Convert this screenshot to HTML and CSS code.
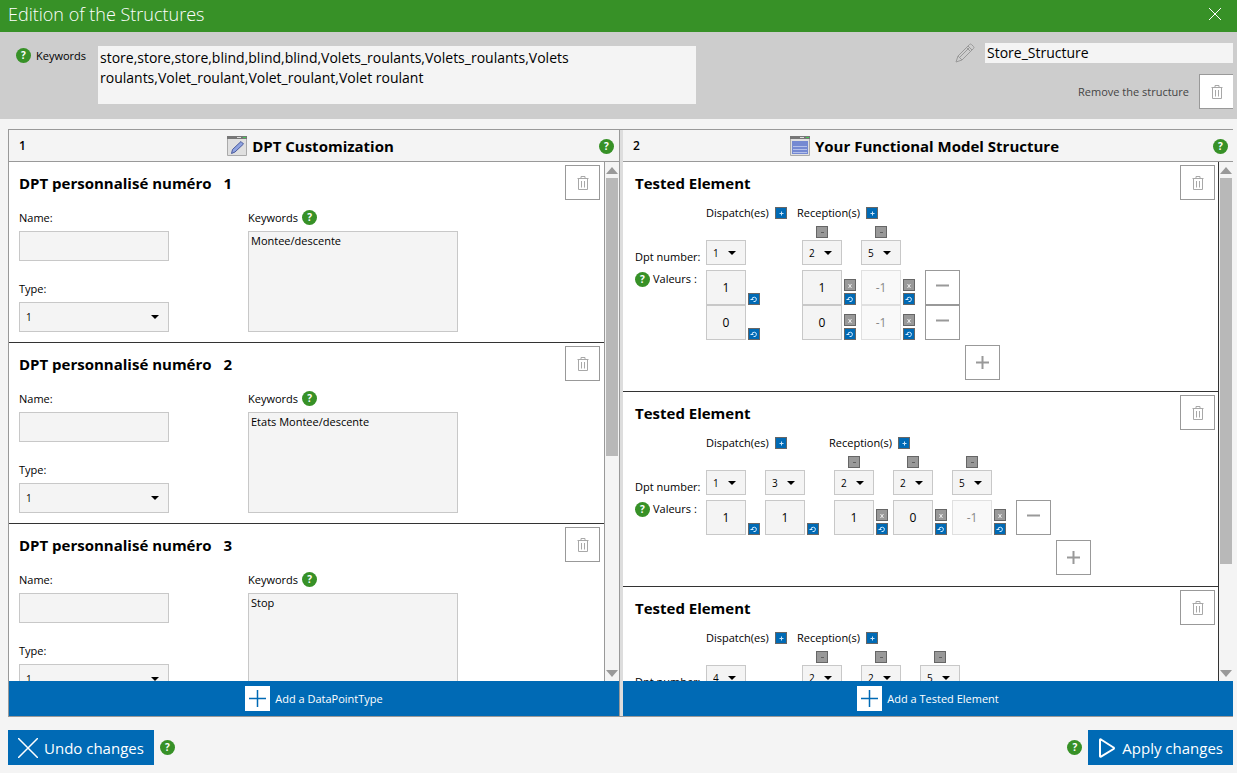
FILE: index.html
```html
<!DOCTYPE html>
<html lang="en">
<head>
<meta charset="utf-8">
<title>Edition of the Structures</title>
<link rel="stylesheet" href="styles.css">
</head>
<body>
<svg class="defs" aria-hidden="true">
  <symbol id="trash" viewBox="0 0 12 14"><path d="M0.500 2.500h11M4 2V0.500h4V2M1.500 3v10.500h9V3M4.500 5v6.500M7.500 5v6.500" fill="none" stroke="#a8a8a8"/></symbol>
  <symbol id="reload" viewBox="0 0 10 10"><path d="M3 5.500a2.200 2.200 0 1 1 1.500 2M1.500 5.500h3" fill="none" stroke="#d4ecff"/></symbol>
  <symbol id="tiny-plus" viewBox="0 0 10 10"><path d="M3.500 5.500h4M5.500 3.500v4" fill="none" stroke="#cfe6f8"/></symbol>
  <symbol id="tiny-minus" viewBox="0 0 10 10"><path d="M4 5.500h3" fill="none" stroke="#606060"/></symbol>
  <symbol id="tiny-x" viewBox="0 0 10 10"><path d="M3.500 4l3 4M6.500 4l-3 4" fill="none" stroke="#eee"/></symbol>
  <symbol id="minus" viewBox="0 0 33 33"><path d="M10 14.500h13" fill="none" stroke="#999" stroke-width="2"/></symbol>
  <symbol id="plus" viewBox="0 0 33 33"><path d="M10 16.500h13M16.500 10v13" fill="none" stroke="#999" stroke-width="2"/></symbol>
</svg>

<header class="titlebar">
  <h1>Edition of the Structures</h1>
  <button class="close" aria-label="Close"><svg width="12" height="12" viewBox="0 0 12 12"><path d="M0 0l12 12M12 0L0 12" stroke="#fff" fill="none"/></svg></button>
</header>

<section class="summary">
  <div class="summary-keywords">
    <button class="help" aria-label="Help on keywords">?</button>
    <label for="keywords">Keywords</label>
    <textarea id="keywords">store,store,store,blind,blind,blind,Volets_roulants,Volets_roulants,Volets roulants,Volet_roulant,Volet_roulant,Volet roulant</textarea>
  </div>
  <div class="summary-side">
    <div class="rename">
      <svg width="20" height="20" viewBox="0 0 20 20" fill="none" stroke="#999"><path d="M1 19l2-6L14.500 1.500q1-1 2 0l2 2q1 1 0 2L7 17zM3 13l4 4M13 3l4 4M11.500 4.500l4 4M4.500 14.500L14 5"/></svg>
      <input type="text" aria-label="Structure name" value="Store_Structure">
    </div>
    <div class="remove-structure">
      <span>Remove the structure</span>
      <button class="square cut" aria-label="Remove the structure"><svg width="12" height="14"><use href="#trash"/></svg></button>
    </div>
  </div>
</section>

<main class="panels">
  <section class="panel panel-left">
    <header class="panel-head">
      <span class="step">1</span>
      <h2><svg width="20" height="20" viewBox="0 0 20 20"><path fill="#e0e0e0" stroke="#aaa" d="M.5.5h19v19H.5z"/><path fill="#777" d="M0 0h20v3H0z"/><path fill="#ddd" d="M10 1h4v1h-4z"/><path fill="#4c5" d="M16 1h3v1h-3z"/><path fill="#8fa3e0" stroke="#4a5a9c" d="M4.500 17.500l1-4L14 5.500l2.500 2.500L8 16z"/></svg>DPT Customization</h2>
      <button class="help" aria-label="Help on customization">?</button>
    </header>
    <div class="panel-body">
      <div class="items">
        <article class="item dpt">
          <header class="item-head"><h3>DPT personnalisé numéro <span>1</span></h3><button class="square" aria-label="Delete DPT 1"><svg width="12" height="14"><use href="#trash"/></svg></button></header>
          <div class="dpt-form">
            <div class="dpt-fields">
              <label for="name1">Name:</label><input id="name1" type="text">
              <label class="second" for="type1">Type:</label><span class="select wide"><select id="type1"><option>1</option></select></span>
            </div>
            <div class="dpt-keywords">
              <div class="label-row"><label for="kw1">Keywords</label><button class="help" aria-label="Help on keywords">?</button></div>
              <textarea id="kw1">Montee/descente</textarea>
            </div>
          </div>
        </article>
        <article class="item dpt">
          <header class="item-head"><h3>DPT personnalisé numéro <span>2</span></h3><button class="square" aria-label="Delete DPT 2"><svg width="12" height="14"><use href="#trash"/></svg></button></header>
          <div class="dpt-form">
            <div class="dpt-fields">
              <label for="name2">Name:</label><input id="name2" type="text">
              <label class="second" for="type2">Type:</label><span class="select wide"><select id="type2"><option>1</option></select></span>
            </div>
            <div class="dpt-keywords">
              <div class="label-row"><label for="kw2">Keywords</label><button class="help" aria-label="Help on keywords">?</button></div>
              <textarea id="kw2">Etats Montee/descente</textarea>
            </div>
          </div>
        </article>
        <article class="item dpt">
          <header class="item-head"><h3>DPT personnalisé numéro <span>3</span></h3><button class="square" aria-label="Delete DPT 3"><svg width="12" height="14"><use href="#trash"/></svg></button></header>
          <div class="dpt-form">
            <div class="dpt-fields">
              <label for="name3">Name:</label><input id="name3" type="text">
              <label class="second" for="type3">Type:</label><span class="select wide"><select id="type3"><option>1</option></select></span>
            </div>
            <div class="dpt-keywords">
              <div class="label-row"><label for="kw3">Keywords</label><button class="help" aria-label="Help on keywords">?</button></div>
              <textarea id="kw3">Stop</textarea>
            </div>
          </div>
        </article>
      </div>
      <div class="scrollbar"><i class="up"></i><div class="track"><div class="thumb thumb-left"></div></div><i class="down"></i></div>
    </div>
    <button class="add-bar"><svg width="25" height="25" viewBox="0 0 25 25"><path fill="#fff" d="M0 0h25v25H0z"/><path stroke="#006ab5" stroke-width="1.500" d="M4 12.500h17M12.500 4v17"/></svg>Add a DataPointType</button>
  </section>

  <section class="panel panel-right">
    <header class="panel-head">
      <span class="step">2</span>
      <h2><svg width="20" height="20" viewBox="0 0 20 20"><path fill="#e0e0e0" stroke="#aaa" d="M.5.5h19v19H.5z"/><path fill="#777" d="M0 0h20v3H0z"/><path fill="#ddd" d="M10 1h4v1h-4z"/><path fill="#4c5" d="M16 1h3v1h-3z"/><path fill="#7489d2" d="M2 5h16v13H2z"/><path stroke="#b4c0ea" d="M3 10.500h14M3 13.500h14M3 16.500h14"/></svg>Your Functional Model Structure</h2>
      <button class="help" aria-label="Help on the model structure">?</button>
    </header>
    <div class="panel-body">
      <div class="items">
        <article class="item test">
          <header class="item-head"><h3>Tested Element</h3><button class="square" aria-label="Delete element"><svg width="12" height="14"><use href="#trash"/></svg></button></header>
          <div class="matrix">
            <div class="row-labels"><span>Dpt number:</span><span><button class="help" aria-label="Help on values">?</button>Valeurs :</span></div>
            <div class="group">
              <div class="group-head">Dispatch(es)<button class="mini blue" aria-label="Add dispatch"><svg><use href="#tiny-plus"/></svg></button></div>
              <div class="cols">
                <div class="col">
                  <span class="select"><select aria-label="Dpt number"><option>1</option></select></span>
                  <div class="cells">
                    <div class="cell"><input aria-label="Value" value="1"><button class="mini blue" aria-label="Reset"><svg><use href="#reload"/></svg></button></div>
                    <div class="cell"><input aria-label="Value" value="0"><button class="mini blue" aria-label="Reset"><svg><use href="#reload"/></svg></button></div>
                  </div>
                </div>
              </div>
            </div>
            <div class="group reception">
              <div class="group-head">Reception(s)<button class="mini blue" aria-label="Add reception"><svg><use href="#tiny-plus"/></svg></button></div>
              <div class="cols">
                <div class="col">
                  <button class="mini grey drop" aria-label="Remove column"><svg><use href="#tiny-minus"/></svg></button>
                  <span class="select"><select aria-label="Dpt number"><option>2</option></select></span>
                  <div class="cells">
                    <div class="cell"><input aria-label="Value" value="1"><div class="tools"><button class="mini grey" aria-label="Disable"><svg><use href="#tiny-x"/></svg></button><button class="mini blue" aria-label="Reset"><svg><use href="#reload"/></svg></button></div></div>
                    <div class="cell"><input aria-label="Value" value="0"><div class="tools"><button class="mini grey" aria-label="Disable"><svg><use href="#tiny-x"/></svg></button><button class="mini blue" aria-label="Reset"><svg><use href="#reload"/></svg></button></div></div>
                  </div>
                </div>
                <div class="col">
                  <button class="mini grey drop" aria-label="Remove column"><svg><use href="#tiny-minus"/></svg></button>
                  <span class="select"><select aria-label="Dpt number"><option>5</option></select></span>
                  <div class="cells">
                    <div class="cell"><input aria-label="Value" value="-1" disabled><div class="tools"><button class="mini grey" aria-label="Disable"><svg><use href="#tiny-x"/></svg></button><button class="mini blue" aria-label="Reset"><svg><use href="#reload"/></svg></button></div></div>
                    <div class="cell"><input aria-label="Value" value="-1" disabled><div class="tools"><button class="mini grey" aria-label="Disable"><svg><use href="#tiny-x"/></svg></button><button class="mini blue" aria-label="Reset"><svg><use href="#reload"/></svg></button></div></div>
                  </div>
                </div>
              </div>
            </div>
            <div class="row-tools">
              <button class="square" aria-label="Remove row"><svg width="33" height="33"><use href="#minus"/></svg></button>
              <button class="square" aria-label="Remove row"><svg width="33" height="33"><use href="#minus"/></svg></button>
            </div>
            <button class="square add-row" aria-label="Add row"><svg width="33" height="33"><use href="#plus"/></svg></button>
          </div>
        </article>

        <article class="item test">
          <header class="item-head"><h3>Tested Element</h3><button class="square" aria-label="Delete element"><svg width="12" height="14"><use href="#trash"/></svg></button></header>
          <div class="matrix">
            <div class="row-labels"><span>Dpt number:</span><span><button class="help" aria-label="Help on values">?</button>Valeurs :</span></div>
            <div class="group">
              <div class="group-head">Dispatch(es)<button class="mini blue" aria-label="Add dispatch"><svg><use href="#tiny-plus"/></svg></button></div>
              <div class="cols">
                <div class="col">
                  <span class="select"><select aria-label="Dpt number"><option>1</option></select></span>
                  <div class="cells"><div class="cell"><input aria-label="Value" value="1"><button class="mini blue" aria-label="Reset"><svg><use href="#reload"/></svg></button></div></div>
                </div>
                <div class="col">
                  <span class="select"><select aria-label="Dpt number"><option>3</option></select></span>
                  <div class="cells"><div class="cell"><input aria-label="Value" value="1"><button class="mini blue" aria-label="Reset"><svg><use href="#reload"/></svg></button></div></div>
                </div>
              </div>
            </div>
            <div class="group reception">
              <div class="group-head">Reception(s)<button class="mini blue" aria-label="Add reception"><svg><use href="#tiny-plus"/></svg></button></div>
              <div class="cols">
                <div class="col">
                  <button class="mini grey drop" aria-label="Remove column"><svg><use href="#tiny-minus"/></svg></button>
                  <span class="select"><select aria-label="Dpt number"><option>2</option></select></span>
                  <div class="cells"><div class="cell"><input aria-label="Value" value="1"><div class="tools"><button class="mini grey" aria-label="Disable"><svg><use href="#tiny-x"/></svg></button><button class="mini blue" aria-label="Reset"><svg><use href="#reload"/></svg></button></div></div></div>
                </div>
                <div class="col">
                  <button class="mini grey drop" aria-label="Remove column"><svg><use href="#tiny-minus"/></svg></button>
                  <span class="select"><select aria-label="Dpt number"><option>2</option></select></span>
                  <div class="cells"><div class="cell"><input aria-label="Value" value="0"><div class="tools"><button class="mini grey" aria-label="Disable"><svg><use href="#tiny-x"/></svg></button><button class="mini blue" aria-label="Reset"><svg><use href="#reload"/></svg></button></div></div></div>
                </div>
                <div class="col">
                  <button class="mini grey drop" aria-label="Remove column"><svg><use href="#tiny-minus"/></svg></button>
                  <span class="select"><select aria-label="Dpt number"><option>5</option></select></span>
                  <div class="cells"><div class="cell"><input aria-label="Value" value="-1" disabled><div class="tools"><button class="mini grey" aria-label="Disable"><svg><use href="#tiny-x"/></svg></button><button class="mini blue" aria-label="Reset"><svg><use href="#reload"/></svg></button></div></div></div>
                </div>
              </div>
            </div>
            <div class="row-tools">
              <button class="square" aria-label="Remove row"><svg width="33" height="33"><use href="#minus"/></svg></button>
            </div>
            <button class="square add-row" aria-label="Add row"><svg width="33" height="33"><use href="#plus"/></svg></button>
          </div>
        </article>

        <article class="item test">
          <header class="item-head"><h3>Tested Element</h3><button class="square" aria-label="Delete element"><svg width="12" height="14"><use href="#trash"/></svg></button></header>
          <div class="matrix">
            <div class="row-labels"><span>Dpt number:</span></div>
            <div class="group">
              <div class="group-head">Dispatch(es)<button class="mini blue" aria-label="Add dispatch"><svg><use href="#tiny-plus"/></svg></button></div>
              <div class="cols">
                <div class="col"><span class="select"><select aria-label="Dpt number"><option>4</option></select></span></div>
              </div>
            </div>
            <div class="group reception">
              <div class="group-head">Reception(s)<button class="mini blue" aria-label="Add reception"><svg><use href="#tiny-plus"/></svg></button></div>
              <div class="cols">
                <div class="col">
                  <button class="mini grey drop" aria-label="Remove column"><svg><use href="#tiny-minus"/></svg></button>
                  <span class="select"><select aria-label="Dpt number"><option>2</option></select></span>
                </div>
                <div class="col">
                  <button class="mini grey drop" aria-label="Remove column"><svg><use href="#tiny-minus"/></svg></button>
                  <span class="select"><select aria-label="Dpt number"><option>2</option></select></span>
                </div>
                <div class="col">
                  <button class="mini grey drop" aria-label="Remove column"><svg><use href="#tiny-minus"/></svg></button>
                  <span class="select"><select aria-label="Dpt number"><option>5</option></select></span>
                </div>
              </div>
            </div>
          </div>
        </article>
      </div>
      <div class="scrollbar dark"><i class="up"></i><div class="track"><div class="thumb thumb-right"></div></div><i class="down"></i></div>
    </div>
    <button class="add-bar"><svg width="25" height="25" viewBox="0 0 25 25"><path fill="#fff" d="M0 0h25v25H0z"/><path stroke="#006ab5" stroke-width="1.500" d="M4 12.500h17M12.500 4v17"/></svg>Add a Tested Element</button>
  </section>
</main>

<footer class="actions">
  <div class="action">
    <button class="primary"><svg width="20" height="20" viewBox="0 0 20 20"><path d="M0 0l20 20M20 0L0 20" stroke="#fff" stroke-width="1.500"/></svg>Undo changes</button>
    <button class="help" aria-label="Help on undo">?</button>
  </div>
  <div class="action">
    <button class="help" aria-label="Help on apply">?</button>
    <button class="primary"><svg width="18" height="20" viewBox="0 0 18 20"><path d="M2 2v16q0 1 1 .5l12.500-7.500q1-1 0-1.500L3 1.500Q2 1 2 2z" fill="none" stroke="#fff" stroke-width="2"/></svg>Apply changes</button>
  </div>
</footer>
</body>
</html>
```
FILE: styles.css
```css
* { box-sizing: border-box; }

body {
  margin: 0;
  height: 100vh;
  display: flex;
  flex-direction: column;
  background: #f4f4f4;
  color: #000;
  font: 11px/20px "Open Sans", "Noto Sans", sans-serif;
}

h1, h2, h3 { margin: 0; }
button, input, select, textarea { font: inherit; color: inherit; margin: 0; padding: 0; border: 0; border-radius: 0; }
textarea { display: block; resize: none; }
svg { display: block; flex: none; }
.defs { display: none; }

.titlebar {
  flex: none;
  display: flex;
  align-items: center;
  justify-content: space-between;
  height: 32px;
  padding: 0 16px 4px 8px;
  background: #379127;
  color: #fff;
}
.titlebar h1 { font-size: 18px; font-weight: 300; line-height: 28px; }
.close { background: none; }

.summary {
  flex: none;
  display: flex;
  justify-content: space-between;
  gap: 16px;
  padding: 11px 4px 10px 16px;
  background: #cdcdcd;
}
.summary-keywords { display: flex; flex: 0 1 680px; align-items: flex-start; padding-top: 3px; }
.summary-keywords .help { margin-top: 2px; }
.summary-keywords label { width: 67px; padding-left: 5px; }
.summary-keywords textarea {
  flex: 1;
  height: 58px;
  padding: 2px;
  background: #f4f4f4;
  font-size: 14px;
  overflow: hidden;
}
.summary-side { display: flex; flex-direction: column; align-items: flex-end; gap: 11px; }
.rename { display: flex; align-items: center; gap: 10px; }
.rename input { width: 248px; height: 20px; padding: 0 2px; background: #f4f4f4; font-size: 14px; }
.remove-structure { display: flex; align-items: center; gap: 10px; color: #444; }

.help {
  flex: none;
  width: 15px;
  height: 15px;
  border-radius: 50%;
  background: #379127;
  color: #fff;
  font-size: 10px;
  font-weight: 700;
  line-height: 15px;
  text-align: center;
}
.square {
  flex: none;
  display: grid;
  place-items: center;
  width: 35px;
  height: 35px;
  border: 1px solid #999;
  background: #fff;
}
.square.cut { width: 34px; border-right: 0; }

.panels {
  flex: 1;
  min-height: 0;
  display: flex;
  gap: 3px;
  margin: 10px 4px 0 8px;
  border: solid #999;
  border-width: 1px 0;
  background: #ddd;
}
.panel { flex: 1 1 0; min-width: 0; display: flex; flex-direction: column; background: #fff; }
.panel-left { box-sizing: content-box; border: solid #999; border-width: 0 1px; }
.panel-head {
  flex: none;
  display: grid;
  grid-template-columns: 1fr auto 1fr;
  align-items: center;
  height: 32px;
  padding: 1px 5px 0 10px;
  border-bottom: 1px solid #999;
  background: #f4f4f4;
}
.step { font-size: 12px; font-weight: 600; }
.panel-head h2 { display: flex; align-items: center; gap: 5px; margin-right: 12px; font-size: 15px; font-weight: 700; }
.panel-head .help { justify-self: end; }
.panel-body { flex: 1; min-height: 0; display: flex; }
.items { flex: 1; min-width: 0; overflow: hidden; }

.scrollbar {
  flex: none;
  display: flex;
  flex-direction: column;
  width: 15px;
  padding: 5px 1px 4px;
  border-left: 1px solid #999;
  background: #f4f4f4;
}
.scrollbar.dark { border-color: #333; }
.scrollbar i { align-self: center; border: 6px solid transparent; }
.scrollbar .up { border-top: 0; border-bottom: 7px solid #999; }
.scrollbar .down { border-bottom: 0; border-top: 7px solid #999; }
.track { flex: 1; margin: 4px 0; }
.thumb { background: #b8b8b8; }
.thumb-left { height: 57%; }
.thumb-right { height: 79%; }

.item { border-bottom: 1px solid #333; padding: 3px 3px 10px 10px; }
.item-head { display: flex; justify-content: space-between; align-items: center; }
.item-head h3 { font-size: 15px; font-weight: 700; line-height: 22px; }
.item-head h3 span { margin-left: 8px; }

.dpt { padding-right: 4px; }
.dpt-form { display: flex; gap: 79px; padding-top: 8px; }
.dpt-fields { width: 150px; display: flex; flex-direction: column; }
.dpt-fields label { margin-bottom: 3px; }
.dpt-fields .second { margin-top: 18px; }
.dpt-fields input, .dpt-keywords textarea, .select select { border: 1px solid #c8c8c8; background: #f4f4f4; }
.dpt-fields input { height: 30px; padding: 0 6px; }
.dpt-keywords { width: 210px; }
.label-row { display: flex; gap: 4px; margin-bottom: 3px; }
.label-row .help { margin-top: 2px; }
.dpt-keywords textarea { width: 100%; height: 101px; padding: 0 2px; line-height: 18px; }

.select { display: grid; align-items: center; }
.select select { grid-area: 1 / 1; width: 100%; height: 25px; padding: 0 6px; appearance: none; font-size: 10px; }
.select::after {
  content: "";
  grid-area: 1 / 1;
  justify-self: end;
  margin-right: 10px;
  border: 4px solid transparent;
  border-top: 4px solid #000;
  border-bottom: 0;
  pointer-events: none;
}
.select.wide select { height: 30px; }

.test { padding-left: 12px; padding-bottom: 11px; }
.matrix { display: grid; grid-template-columns: repeat(5, auto); justify-content: start; gap: 5px; }
.row-labels { display: flex; flex-direction: column; gap: 2px; width: 66px; padding-top: 47px; white-space: nowrap; }
.row-labels span { display: flex; align-items: center; gap: 3px; }
.group { min-width: 86px; }
.group-head { display: flex; align-items: center; gap: 6px; height: 26px; }
.cols { display: flex; }
.reception .cols { padding-left: 5px; }
.col { display: flex; flex-direction: column; justify-content: flex-end; width: 59px; padding-top: 14px; }
.col .select { width: 40px; }
.drop { margin: -14px 0 2px 14px; }
.cells { padding-top: 5px; }
.cell { display: flex; align-items: flex-end; gap: 2px; }
.cell input { width: 40px; height: 35px; border: 1px solid #c8c8c8; background: #f4f4f4; font-size: 12px; text-align: center; }
.cell input:disabled { border-color: #e0e0e0; background: #f9f9f9; color: #888; }
.tools { display: grid; gap: 2px; }
.mini { flex: none; width: 12px; height: 12px; border: 1px solid #666; }
.mini svg { width: 10px; height: 10px; }
.blue { background: #006ab5; }
.grey { background: #999; }
.row-tools { padding-top: 70px; }
.add-row { grid-area: 2 / 5; }

.add-bar {
  flex: none;
  display: flex;
  align-items: center;
  justify-content: center;
  gap: 5px;
  height: 35px;
  background: #006ab5;
  color: #fff;
}

.actions { flex: none; display: flex; justify-content: space-between; padding: 13px 4px 8px 8px; }
.action { display: flex; align-items: center; gap: 6px; }
.primary {
  display: flex;
  align-items: center;
  gap: 6px;
  height: 35px;
  padding: 0 10px;
  background: #006ab5;
  color: #fff;
  font-size: 15px;
}
```
